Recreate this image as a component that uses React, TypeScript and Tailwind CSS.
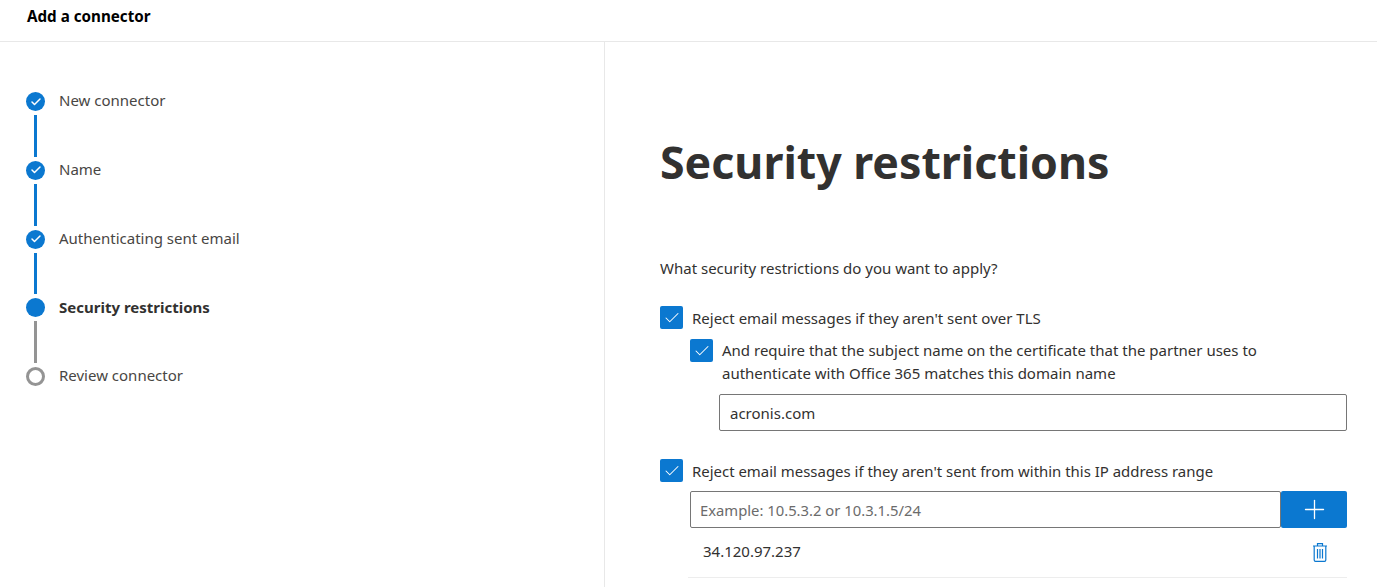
import { Check, Plus } from "lucide-react";

const font = "font-['Noto_Sans','Open_Sans',sans-serif]";

const steps = [
  { label: "New connector", state: "done" },
  { label: "Name", state: "done" },
  { label: "Authenticating sent email", state: "done" },
  { label: "Security restrictions", state: "current" },
  { label: "Review connector", state: "todo" },
];

function StepDot({ state }: { state: string }) {
  if (state === "done") {
    return (
      <div className="w-[19px] h-[19px] rounded-full bg-[#0b78d0] flex items-center justify-center">
        <Check size={12} strokeWidth={3} className="text-white" />
      </div>
    );
  }
  if (state === "current") return <div className="w-[19px] h-[19px] rounded-full bg-[#0b78d0]" />;
  return <div className="w-[19px] h-[19px] rounded-full border-[3px] border-[#949494] bg-white" />;
}

function Box() {
  return (
    <div className="w-[23px] h-[23px] shrink-0 rounded-[2px] bg-[#0b78d0] flex items-center justify-center">
      <Check size={18} strokeWidth={1.4} className="text-white" />
    </div>
  );
}

function TrashIcon() {
  return (
    <svg width="16" height="20" viewBox="0 0 16 20" fill="none" stroke="#0b78d0" strokeWidth="1.2">
      <path d="M1 4h14M5.5 4V1.6h5V4" />
      <path d="M2.2 4v14c0 .8.5 1.3 1.3 1.3h9c.8 0 1.3-.5 1.3-1.3V4" />
      <path d="M5.5 7v9.5M8 7v9.5M10.5 7v9.5" />
    </svg>
  );
}

export default function App() {
  return (
    <div className={`${font} h-[587px] overflow-hidden bg-white text-[#323130] flex flex-col`}>
      <header className="h-[42px] shrink-0 border-b border-[#e8e8e8] pl-[27px] pt-[5px] text-[15.2px] leading-[22px] font-bold text-black">
        Add a connector
      </header>

      <div className="flex flex-1 min-h-0">
        <aside className="w-[605px] shrink-0 border-r border-[#e8e8e8] pl-[26px] pt-[50px]">
          {steps.map((step, i) => (
            <div key={step.label}>
              <div className="flex items-center h-[19px]">
                <StepDot state={step.state} />
                <span
                  className={`ml-[14px] text-[15px] whitespace-nowrap -translate-y-px ${
                    step.state === "current" ? "font-bold" : "text-[#484644]"
                  }`}
                >
                  {step.label}
                </span>
              </div>
              {i < steps.length - 1 && (
                <div
                  className={`ml-[8px] w-[3px] h-[41.75px] my-[4px] ${
                    i < 3 ? "bg-[#0b78d0]" : "bg-[#949494]"
                  }`}
                />
              )}
            </div>
          ))}
        </aside>

        <main className="flex-1 min-w-0 pl-[55px] pr-[30px] pt-[87px]">
          <h1 className="text-[44.7px] leading-[66px] font-bold whitespace-nowrap">Security restrictions</h1>

          <p className="mt-[62px] text-[15px] leading-[22px]">What security restrictions do you want to apply?</p>

          <div className="mt-[27px] flex items-center gap-[9px]">
            <Box />
            <span className="text-[15px] leading-[22px]">Reject email messages if they aren't sent over TLS</span>
          </div>

          <div className="mt-[10px] ml-[30px] flex items-start gap-[9px]">
            <Box />
            <span className="text-[15px] leading-[23px] w-[580px]">
              And require that the subject name on the certificate that the partner uses to authenticate with Office 365 matches this domain name
            </span>
          </div>

          <div className="mt-[9px] ml-[59px] h-[37px] border border-[#767676] rounded-[2px] px-[10px] pt-[1px] flex items-center text-[15px]">
            acronis.com
          </div>

          <div className="mt-[28px] flex items-center gap-[9px]">
            <Box />
            <span className="text-[14.95px] leading-[22px]">Reject email messages if they aren't sent from within this IP address range</span>
          </div>

          <div className="mt-[9px] ml-[30px] flex h-[37px]">
            <div className="flex-1 border border-[#767676] rounded-[2px] px-[9px] pt-[1px] flex items-center text-[14.8px] text-[#6b6b6b]">
              Example: 10.5.3.2 or 10.3.1.5/24
            </div>
            <div className="w-[66px] rounded-[2px] bg-[#0b78d0] flex items-center justify-center">
              <Plus size={31} strokeWidth={1} className="text-white" />
            </div>
          </div>

          <div className="ml-[28px] h-[50px] border-b border-[#ededed] pl-[15px] pr-[19px] pb-[2px] flex items-center justify-between text-[15px]">
            <span>34.120.97.237</span>
            <TrashIcon />
          </div>
        </main>
      </div>
    </div>
  );
}
